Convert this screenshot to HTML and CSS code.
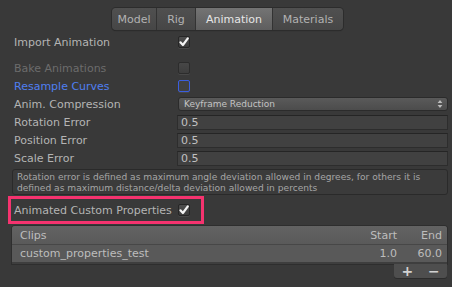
FILE: index.html
```html
<!DOCTYPE html>
<html>
<head>
<meta charset="utf-8">
<link rel="stylesheet" href="styles.css">
</head>
<body>
<div class="panel">
  <div class="tabs-wrap">
    <div class="tabs">
      <div class="tab t-model">Model</div>
      <div class="tab t-rig">Rig</div>
      <div class="tab t-anim active">Animation</div>
      <div class="tab t-mat">Materials</div>
    </div>
  </div>

  <div class="row r-import">
    <div class="label">Import Animation</div>
    <div class="ctrl"><span class="check on"><svg viewBox="0 0 12 12" width="12" height="12"><path d="M2.4 6.3 L4.9 9 L9.8 2.4" fill="none" stroke="#f4f4f4" stroke-width="2.2" stroke-linecap="round" stroke-linejoin="round"/></svg></span></div>
  </div>

  <div class="row r-bake">
    <div class="label disabled">Bake Animations</div>
    <div class="ctrl"><span class="check dim"></span></div>
  </div>

  <div class="row">
    <div class="label blue">Resample Curves</div>
    <div class="ctrl"><span class="check focus"></span></div>
  </div>

  <div class="row">
    <div class="label">Anim. Compression</div>
    <div class="ctrl"><div class="dropdown"><span>Keyframe Reduction</span><svg class="arrows" viewBox="0 0 6 10" width="6" height="10"><path d="M3 1 L5.4 4 L0.6 4 Z M3 9 L5.4 6 L0.6 6 Z" fill="#bdbdbd"/></svg></div></div>
  </div>

  <div class="row">
    <div class="label">Rotation Error</div>
    <div class="ctrl"><div class="field">0.5</div></div>
  </div>
  <div class="row">
    <div class="label">Position Error</div>
    <div class="ctrl"><div class="field">0.5</div></div>
  </div>
  <div class="row">
    <div class="label">Scale Error</div>
    <div class="ctrl"><div class="field">0.5</div></div>
  </div>

  <div class="help">Rotation error is defined as maximum angle deviation allowed in degrees, for others it is<br>defined as maximum distance/delta deviation allowed in percents</div>

  <div class="highlight">
    <div class="label wide">Animated Custom Properties</div>
    <span class="check on"><svg viewBox="0 0 12 12" width="12" height="12"><path d="M2.4 6.3 L4.9 9 L9.8 2.4" fill="none" stroke="#f4f4f4" stroke-width="2.2" stroke-linecap="round" stroke-linejoin="round"/></svg></span>
  </div>

  <div class="clips">
    <div class="clips-head">
      <span class="c-name">Clips</span>
      <span class="c-start">Start</span>
      <span class="c-end">End</span>
    </div>
    <div class="clips-row">
      <span class="c-name">custom_properties_test</span>
      <span class="c-start">1.0</span>
      <span class="c-end">60.0</span>
    </div>
  </div>
  <div class="footer-wrap">
    <div class="footer"><span class="pm">+</span><span class="pm">&minus;</span></div>
  </div>
</div>
</body>
</html>
```

FILE: styles.css
```css
html, body {
  margin: 0;
  padding: 0;
  background: #393939;
  width: 452px;
  height: 287px;
  overflow: hidden;
}
.panel {
  font-family: "DejaVu Sans", sans-serif;
  font-size: 11px;
  color: #b4b4b4;
}
.tabs-wrap {
  display: flex;
  padding-top: 8px;
  padding-left: 112px;
}
.tabs {
  display: flex;
  height: 22px;
  border-radius: 4px;
  overflow: hidden;
  box-shadow: 0 0 0 1px #2c2c2c, 0 1px 1px rgba(0,0,0,0.35);
}
.tab {
  display: flex;
  align-items: center;
  justify-content: center;
  height: 22px;
  background: linear-gradient(#505050, #464646);
  color: #b2b2b2;
  font-size: 11px;
  border-right: 1px solid #333;
  box-sizing: border-box;
}
.tab:last-child { border-right: none; }
.t-model { width: 45px; }
.t-rig { width: 39px; }
.t-anim { width: 77px; }
.t-mat { width: 70px; }
.tab.active {
  background: linear-gradient(#747474, #5e5e5e);
  color: #e6e6e6;
}

.row {
  display: flex;
  align-items: center;
  height: 18px;
  padding-left: 14px;
  padding-right: 4px;
}
.r-import { margin-top: 3px; }
.r-bake { margin-top: 8px; }
.label {
  width: 164px;
  flex: none;
  white-space: nowrap;
}
.label.disabled { color: #6c6c6c; }
.label.blue { color: #4f7ff2; }
.ctrl {
  flex: 1;
  display: flex;
  align-items: center;
}
.check {
  display: inline-flex;
  align-items: center;
  justify-content: center;
  width: 12px;
  height: 12px;
  box-sizing: border-box;
  border-radius: 2px;
  background: linear-gradient(#4e4e4e, #3c3c3c);
  border: 1px solid #262626;
  box-shadow: 0 1px 0 rgba(255,255,255,0.08);
  overflow: visible;
}
.check svg { display: block; margin-top: -1px; flex: none; }
.check.dim {
  background: linear-gradient(#474747, #3e3e3e);
  border-color: #2c2c2c;
}
.check.focus {
  border: 1.5px solid #3a5ee0;
  background: #414141;
}
.dropdown {
  flex: 1;
  height: 14px;
  box-sizing: border-box;
  border: 1px solid #2b2b2b;
  border-radius: 3px;
  background: linear-gradient(#5a5a5a, #4c4c4c);
  display: flex;
  align-items: center;
  justify-content: space-between;
  padding: 0 4px 0 5px;
  font-size: 9px;
  color: #c4c4c4;
}
.arrows { display: block; }
.field {
  flex: 1;
  height: 15px;
  margin-left: -1px;
  box-sizing: border-box;
  background: #414141;
  border: 1px solid #2d2d2d;
  border-top-color: #252525;
  display: flex;
  align-items: center;
  padding-left: 3px;
  color: #c0c0c0;
}
.help {
  margin: 2px 4px 0 12px;
  height: 26px;
  box-sizing: border-box;
  border: 1px solid #2a2a2a;
  border-radius: 3px;
  background: #3b3b3b;
  font-size: 9.1px;
  line-height: 11px;
  color: #a6a6a6;
  padding: 2px 0 0 4px;
  white-space: nowrap;
  overflow: hidden;
}
.highlight {
  display: flex;
  align-items: center;
  width: 196px;
  height: 28px;
  box-sizing: border-box;
  margin: 1px 0 0 8px;
  border: 3px solid #f5336f;
  padding-left: 3px;
}
.label.wide { width: 164px; }
.clips {
  margin: 2px 5px 0 12px;
  border-radius: 3px 3px 0 0;
  overflow: hidden;
  background: #595959;
  border-bottom: 2px solid #3e3e3e;
  box-shadow: 0 0 0 1px #2e2e2e;
}
.clips-head, .clips-row {
  display: flex;
  align-items: center;
  padding: 0 5px 0 8px;
  color: #bdbdbd;
}
.clips-head {
  height: 19px;
  background: linear-gradient(#636363, #5a5a5a);
  border-bottom: 1px solid #474747;
  box-sizing: border-box;
}
.clips-row {
  height: 17px;
  background: #595959;
}
.c-name { flex: 1; }
.c-start { width: 50px; text-align: right; }
.c-end { width: 45px; text-align: right; }
.footer-wrap {
  display: flex;
  justify-content: flex-end;
  padding-right: 5px;
}
.footer {
  width: 53px;
  height: 14px;
  background: #4e4e4e;
  border-radius: 0 0 3px 3px;
  box-shadow: 0 1px 0 #2c2c2c;
  display: flex;
  align-items: center;
  justify-content: space-around;
  font-size: 14px;
  font-weight: bold;
  color: #d2d2d2;
  line-height: 14px;
}
.pm { display: block; }
```
